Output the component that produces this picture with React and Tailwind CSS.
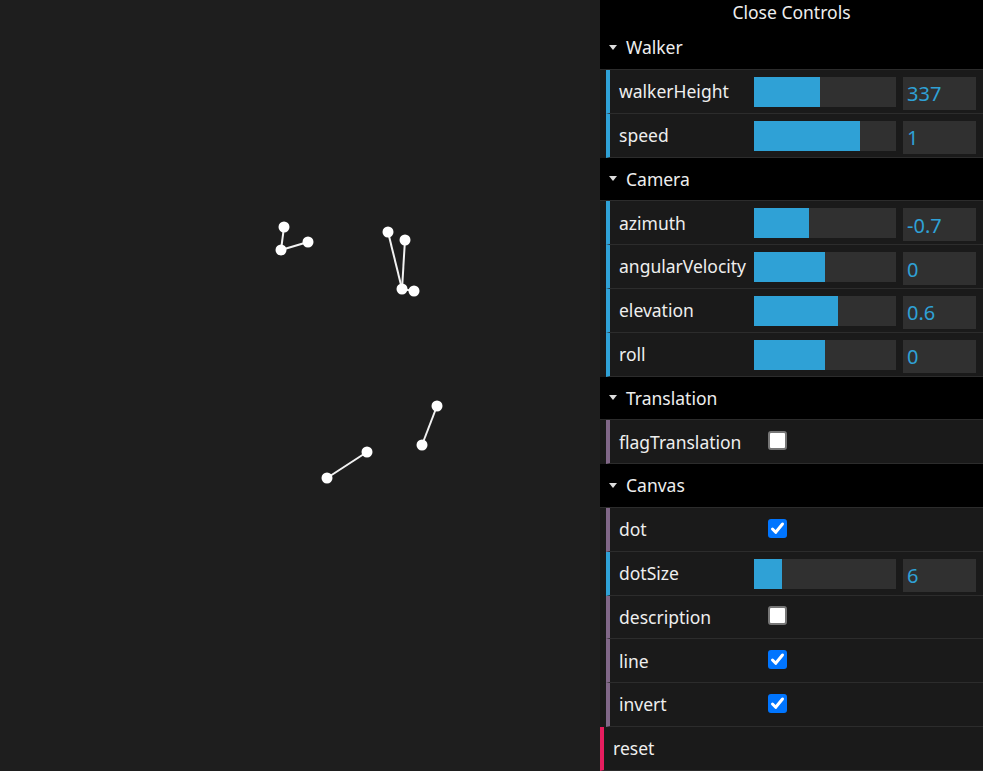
import React from "react";

const font = { fontFamily: '"Noto Sans", "Open Sans", Arial, sans-serif' };

/* stick figure on the canvas */
const dots = [
  [284, 227], [281, 250], [308, 242],
  [388, 232], [405, 240], [402, 289], [414, 291],
  [327, 478], [367, 452],
  [422, 445], [437, 406]
];

const lines = [
  [0, 1], [1, 2],
  [3, 5], [4, 5], [5, 6],
  [7, 8],
  [9, 10]
];

function Title({ children }) {
  return (
    <div className="h-[43.8px] shrink-0 bg-black border-b border-[#2c2c2c] flex items-center text-[17.5px] text-[#eee]">
      <svg width="8" height="5" viewBox="0 0 8 5" className="ml-[9px] mr-[9px]">
        <polygon points="0,0 8,0 4,5" fill="#ddd" />
      </svg>
      <span>{children}</span>
    </div>
  );
}

function Row({ label, color, children }) {
  return (
    <div className={`h-[43.8px] shrink-0 ml-[6px] border-l-4 border-b border-b-[#2c2c2c] flex items-center ${color}`}>
      <div className="w-[144px] shrink-0 pl-[9px] text-[17.5px] text-[#eee] whitespace-nowrap">{label}</div>
      {children}
    </div>
  );
}

function Slider({ label, fill, value }) {
  return (
    <Row label={label} color="border-l-[#2fa1d6]">
      <div className="flex items-start self-start mt-[7px]">
        <div className="w-[142px] h-[30px] bg-[#303030]">
          <div className="h-full bg-[#2fa1d6]" style={{ width: fill }} />
        </div>
        <div className="ml-[7px] w-[73px] h-[33px] bg-[#303030] flex items-center pl-[4px] pt-[2px] text-[20px] text-[#2fa1d6]">
          {value}
        </div>
      </div>
    </Row>
  );
}

function Check({ label, checked }) {
  return (
    <Row label={label} color="border-l-[#806787]">
      <div className="ml-[14px] -mt-[2px]">
        {checked ? (
          <div className="w-[19px] h-[19px] rounded-[3px] bg-[#0075ff] flex items-center justify-center">
            <svg width="19" height="19" viewBox="0 0 19 19">
              <polyline points="4.5,10 7.7,13.3 14.5,5" fill="none" stroke="#fff" strokeWidth="3" strokeLinecap="round" strokeLinejoin="round" />
            </svg>
          </div>
        ) : (
          <div className="w-[19px] h-[19px] rounded-[3px] bg-white border-2 border-[#767676]" />
        )}
      </div>
    </Row>
  );
}

export default function App() {
  return (
    <div className="flex w-[983px] h-[771px] bg-[#1e1e1e] overflow-hidden" style={font}>

      {/* CANVAS */}
      <div className="w-[600px] h-full shrink-0">
        <svg width="600" height="771">
          {lines.map(([a, b], i) => (
            <line key={i} x1={dots[a][0]} y1={dots[a][1]} x2={dots[b][0]} y2={dots[b][1]} stroke="#f2f2f2" strokeWidth="2" />
          ))}
          {dots.map(([x, y], i) => (
            <circle key={i} cx={x} cy={y} r="5.5" fill="#fff" />
          ))}
        </svg>
      </div>

      {/* CONTROLS */}
      <div className="w-[383px] shrink-0 flex flex-col bg-[#1a1a1a]">

        <div className="h-[26.2px] shrink-0 bg-black flex justify-center text-[17.5px] text-[#eee] leading-[24px]">
          Close Controls
        </div>

        <Title>Walker</Title>
        <Slider label="walkerHeight" fill={66} value="337" />
        <Slider label="speed" fill={106} value="1" />

        <Title>Camera</Title>
        <Slider label="azimuth" fill={55} value="-0.7" />
        <Slider label="angularVelocity" fill={71} value="0" />
        <Slider label="elevation" fill={84} value="0.6" />
        <Slider label="roll" fill={71} value="0" />

        <Title>Translation</Title>
        <Check label="flagTranslation" checked={false} />

        <Title>Canvas</Title>
        <Check label="dot" checked={true} />
        <Slider label="dotSize" fill={28} value="6" />
        <Check label="description" checked={false} />
        <Check label="line" checked={true} />
        <Check label="invert" checked={true} />

        <div className="h-[43.8px] shrink-0 border-l-4 border-l-[#e61d5f] border-b border-b-[#2c2c2c] flex items-center pl-[9px] text-[17.5px] text-[#eee]">
          reset
        </div>

      </div>
    </div>
  );
}
